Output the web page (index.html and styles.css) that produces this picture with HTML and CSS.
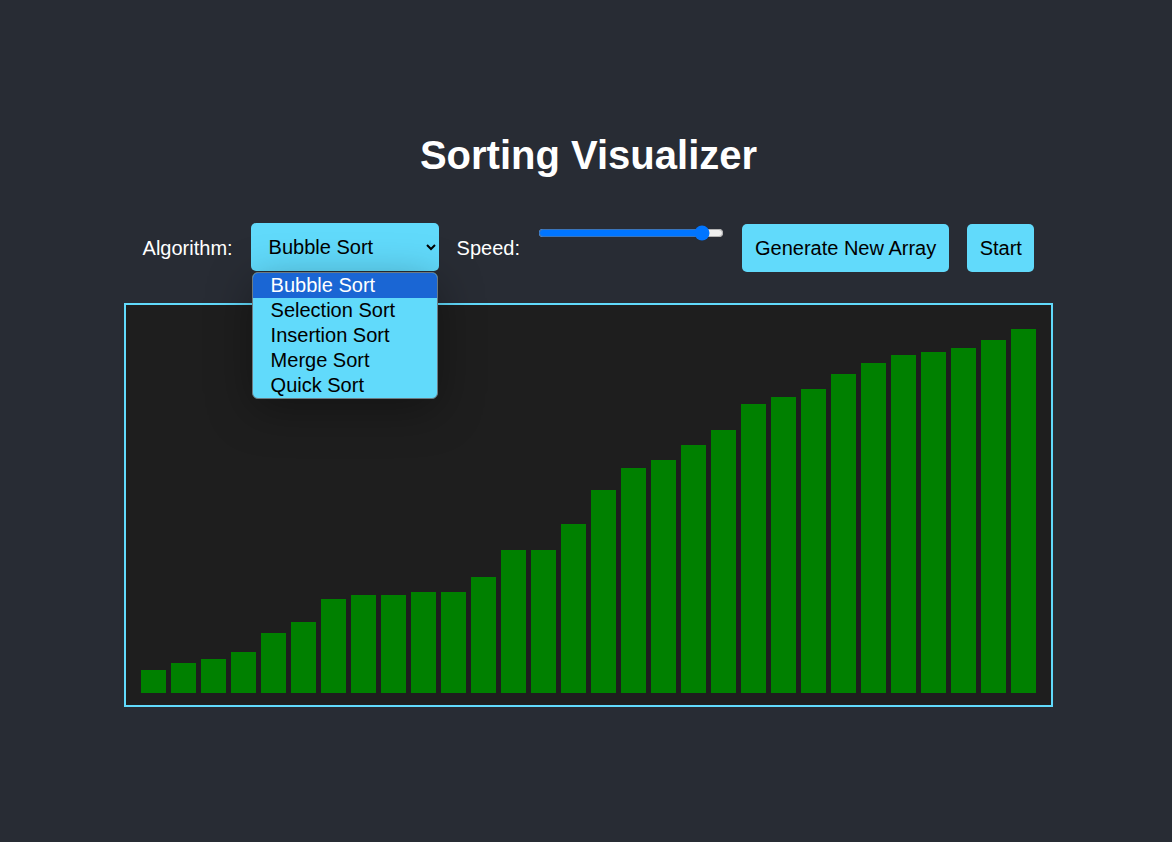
FILE: index.html
```html
<!DOCTYPE html>
<html lang="en">
<head>
<meta charset="utf-8">
<title>Sorting Visualizer</title>
<link rel="stylesheet" href="styles.css">
</head>
<body>
<div class="app">
  <h1 class="title">Sorting Visualizer</h1>
  <div class="controls">
    <span class="label">Algorithm:</span>
    <div class="select-wrap">
      <select class="algo-select">
        <option>Bubble Sort</option>
        <option>Selection Sort</option>
        <option>Insertion Sort</option>
        <option>Merge Sort</option>
        <option>Quick Sort</option>
      </select>
      <ul class="dropdown">
        <li class="dropdown-item active">Bubble Sort</li>
        <li class="dropdown-item">Selection Sort</li>
        <li class="dropdown-item">Insertion Sort</li>
        <li class="dropdown-item">Merge Sort</li>
        <li class="dropdown-item">Quick Sort</li>
      </ul>
    </div>
    <span class="label">Speed:</span>
    <input class="speed" type="range" min="0" max="100" value="92">
    <button class="btn">Generate New Array</button>
    <button class="btn btn-start">Start</button>
  </div>
  <div class="chart">
    <div class="bar" style="height:23px"></div>
    <div class="bar" style="height:30px"></div>
    <div class="bar" style="height:34px"></div>
    <div class="bar" style="height:41px"></div>
    <div class="bar" style="height:60px"></div>
    <div class="bar" style="height:71px"></div>
    <div class="bar" style="height:94px"></div>
    <div class="bar" style="height:98px"></div>
    <div class="bar" style="height:98px"></div>
    <div class="bar" style="height:101px"></div>
    <div class="bar" style="height:101px"></div>
    <div class="bar" style="height:116px"></div>
    <div class="bar" style="height:143px"></div>
    <div class="bar" style="height:143px"></div>
    <div class="bar" style="height:169px"></div>
    <div class="bar" style="height:203px"></div>
    <div class="bar" style="height:225px"></div>
    <div class="bar" style="height:233px"></div>
    <div class="bar" style="height:248px"></div>
    <div class="bar" style="height:263px"></div>
    <div class="bar" style="height:289px"></div>
    <div class="bar" style="height:296px"></div>
    <div class="bar" style="height:304px"></div>
    <div class="bar" style="height:319px"></div>
    <div class="bar" style="height:330px"></div>
    <div class="bar" style="height:338px"></div>
    <div class="bar" style="height:341px"></div>
    <div class="bar" style="height:345px"></div>
    <div class="bar" style="height:353px"></div>
    <div class="bar" style="height:364px"></div>
  </div>
</div>
</body>
</html>
```

FILE: styles.css
```css
html, body {
  margin: 0;
  padding: 0;
  background: #282c34;
}

body {
  font-family: "Liberation Sans", Arial, sans-serif;
  color: #ffffff;
  min-height: 842px;
}

.app {
  padding: 110px 0 0 5px;
  display: flex;
  flex-direction: column;
  align-items: center;
}

.title {
  margin: 22px 0 45px;
  font-size: 40px;
  font-weight: bold;
  line-height: 46px;
  color: #ffffff;
}

.controls {
  display: flex;
  align-items: center;
  gap: 18px;
  height: 49px;
}

.label {
  padding-top: 2px;
  font-size: 20px;
  color: #ffffff;
}

.select-wrap {
  position: relative;
  align-self: flex-start;
}

.algo-select {
  display: block;
  width: 188px;
  height: 48px;
  padding: 0 10px 0 14px;
  font-family: "Liberation Sans", Arial, sans-serif;
  font-size: 20px;
  color: #000000;
  background-color: #61dafb;
  border: none;
  border-radius: 5px;
}

.dropdown {
  position: absolute;
  top: 49px;
  left: 1px;
  width: 186px;
  box-sizing: border-box;
  margin: 0;
  padding: 0;
  list-style: none;
  background: #61dafb;
  border: 1px solid #6b7b84;
  border-radius: 6px;
  overflow: hidden;
  box-shadow: 0 10px 45px rgba(0, 0, 0, 0.35);
  z-index: 5;
}

.dropdown-item {
  height: 25px;
  line-height: 25px;
  padding-left: 18px;
  font-size: 20px;
  color: #000000;
}

.dropdown-item.active {
  background: #1a66d4;
  color: #ffffff;
}

.speed {
  align-self: flex-start;
  width: 186px;
  margin: 2px 0 0;
}

.btn {
  align-self: flex-end;
  height: 48px;
  padding: 0 13px;
  font-family: "Liberation Sans", Arial, sans-serif;
  font-size: 20px;
  color: #000000;
  background: #61dafb;
  border: none;
  border-radius: 5px;
}

.btn-start {
  padding: 0 12.5px;
}

.chart {
  margin-top: 31px;
  width: 925px;
  height: 400px;
  border: 2px solid #61dafb;
  background: #1e1e1e;
  display: flex;
  align-items: flex-end;
  justify-content: center;
  gap: 5px;
}

.bar {
  width: 25px;
  background: #008000;
  margin-bottom: 12px;
}
```
